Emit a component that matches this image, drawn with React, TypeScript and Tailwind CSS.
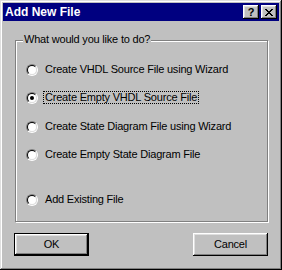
import { useState } from 'react';

const options = [
  { id: 'wizard-vhdl', label: 'Create VHDL Source File using Wizard', gap: 'mt-0' },
  { id: 'empty-vhdl', label: 'Create Empty VHDL Source File', gap: 'mt-[15px]' },
  { id: 'wizard-state', label: 'Create State Diagram File using Wizard', gap: 'mt-[16px]' },
  { id: 'empty-state', label: 'Create Empty State Diagram File', gap: 'mt-[15px]' },
  { id: 'existing', label: 'Add Existing File', gap: 'mt-[32px]' },
];

const bevel =
  'shadow-[inset_-1px_-1px_#000,inset_1px_1px_#fff,inset_-2px_-2px_#808080,inset_2px_2px_#dfdfdf]';

function Radio({ checked }: { checked: boolean }) {
  return (
    <span className="box-border flex h-[12px] w-[12px] shrink-0 rounded-full border border-t-[#808080] border-r-white border-b-white border-l-[#808080]">
      <span className="box-border flex h-full w-full items-center justify-center rounded-full border border-t-black border-r-[#dfdfdf] border-b-[#dfdfdf] border-l-black bg-white">
        {checked && <span className="h-[4px] w-[4px] rounded-full bg-black" />}
      </span>
    </span>
  );
}

export default function App() {
  const [choice, setChoice] = useState('empty-vhdl');

  return (
    <div
      className={`box-border flex h-[270px] w-[282px] flex-col bg-[#c0c0c0] p-[3px] font-['Liberation_Sans',Arial,sans-serif] text-[11px] tracking-[-0.2px] text-black shadow-[inset_-1px_-1px_#000,inset_1px_1px_#dfdfdf,inset_-2px_-2px_#808080,inset_2px_2px_#fff]`}
    >
      <div className="flex h-[18px] items-center justify-between bg-[#000080] pl-[2px] pr-[2px]">
        <span className="text-[12px] font-bold leading-none tracking-normal text-white">Add New File</span>
        <div className="flex gap-[2px]">
          <button className={`flex h-[14px] w-[16px] items-center justify-center bg-[#c0c0c0] text-[11px] font-bold leading-none ${bevel}`}>
            ?
          </button>
          <button className={`flex h-[14px] w-[16px] items-center justify-center bg-[#c0c0c0] ${bevel}`}>
            <svg width="8" height="7" viewBox="0 0 8 7" shapeRendering="crispEdges">
              <path d="M0 0h2v1h-2zM6 0h2v1h-2zM1 1h2v1h-2zM5 1h2v1h-2zM2 2h4v1h-4zM3 3h2v1h-2zM2 4h4v1h-4zM1 5h2v1h-2zM5 5h2v1h-2zM0 6h2v1h-2zM6 6h2v1h-2z" fill="#000" />
            </svg>
          </button>
        </div>
      </div>

      <div className="flex flex-1 flex-col pl-[12px] pr-[11px]">
        <div className="relative mt-[19px] box-border h-[182px] w-[253px] border border-[#808080] shadow-[1px_1px_0_#fff,inset_1px_1px_0_#fff]">
          <span className="absolute -top-[8px] left-[7px] bg-[#c0c0c0] px-[1px] leading-[13px]">
            What would you like to do?
          </span>
          <div className="flex flex-col pl-[10px] pt-[22px]">
            {options.map((option) => (
              <label
                key={option.id}
                className={`flex h-[13px] items-center ${option.gap}`}
                onClick={() => setChoice(option.id)}
              >
                <Radio checked={choice === option.id} />
                <span
                  className={`ml-[5px] border px-[1px] leading-[11px] ${
                    choice === option.id ? 'border-dotted border-black' : 'border-transparent'
                  }`}
                >
                  {option.label}
                </span>
              </label>
            ))}
          </div>
        </div>

        <div className="mt-[11px] flex justify-between">
          <button className={`-ml-[1px] box-border h-[23px] w-[75px] border border-black bg-[#c0c0c0] ${bevel}`}>
            OK
          </button>
          <button className={`box-border h-[23px] w-[75px] bg-[#c0c0c0] ${bevel}`}>Cancel</button>
        </div>
      </div>
    </div>
  );
}
